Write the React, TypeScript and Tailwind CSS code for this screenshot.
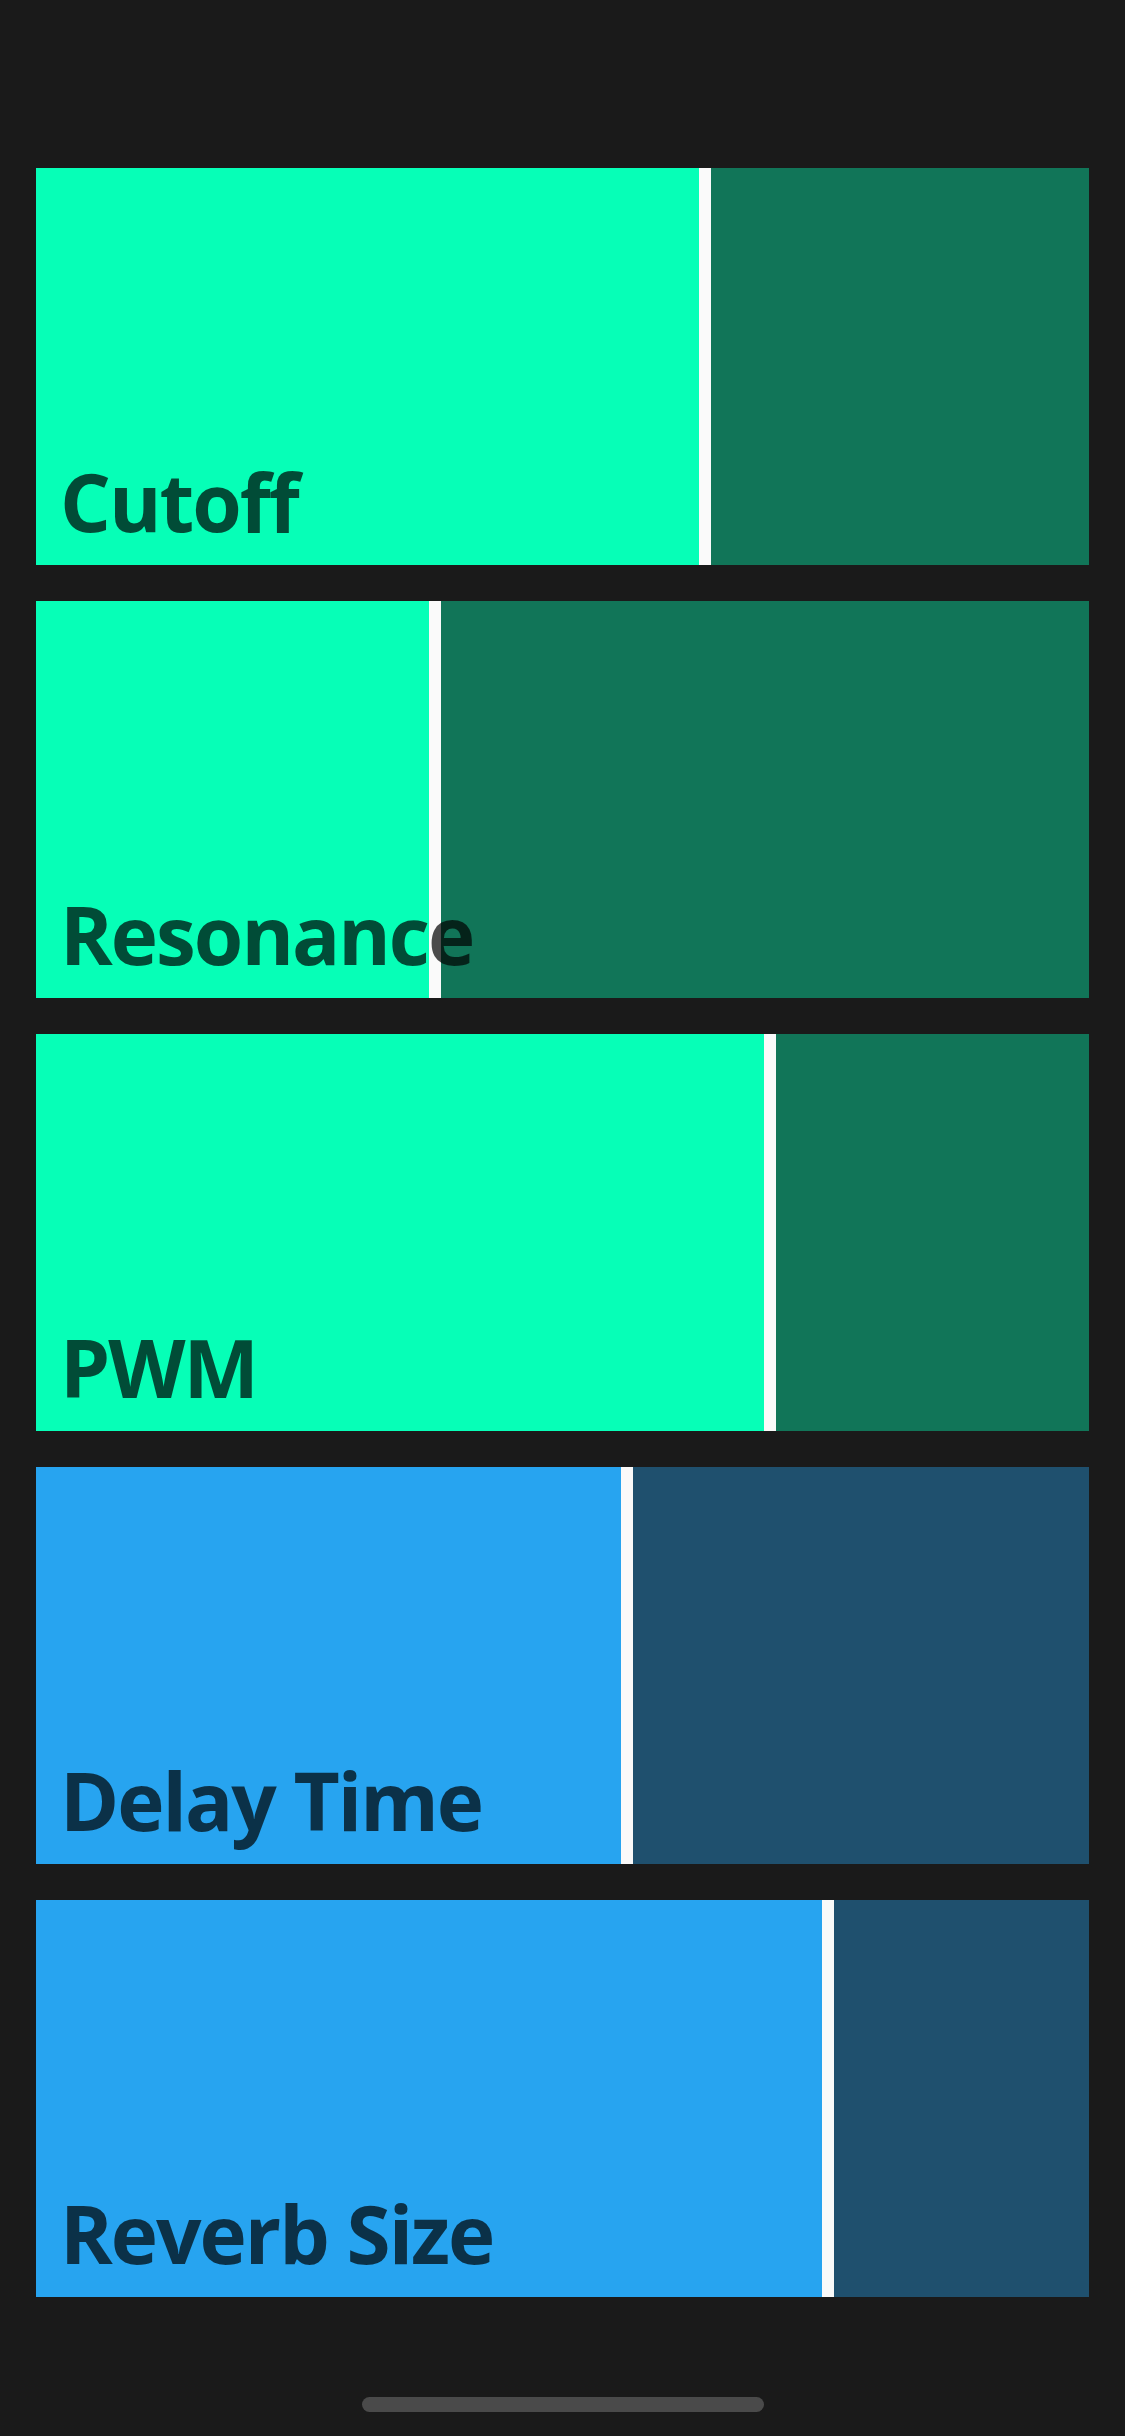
const params = [
  { label: 'Cutoff', value: 663, tone: 'green' },
  { label: 'Resonance', value: 393, tone: 'green' },
  { label: 'PWM', value: 728, tone: 'green' },
  { label: 'Delay Time', value: 585, tone: 'blue' },
  { label: 'Reverb Size', value: 786, tone: 'blue' },
];

function Slider({ label, value, tone }: { label: string; value: number; tone: string }) {
  const green = tone === 'green';
  return (
    <div className={`relative flex h-[397px] w-full ${green ? 'bg-[#117558]' : 'bg-[#1f506e]'}`}>
      <div className={green ? 'bg-[#06ffb7]' : 'bg-[#27a4f0]'} style={{ width: `${value}px` }} />
      <div className="w-[12px] bg-[#fafafa]" />
      <span className="absolute left-[24px] bottom-[24px] text-[80px] leading-none font-bold text-black/70 font-['Open_Sans',sans-serif] tracking-[-2px]">
        {label}
      </span>
    </div>
  );
}

export default function App() {
  return (
    <div className="w-[1125px] h-[2436px] bg-[#1a1a1a] flex flex-col">
      <div className="flex flex-col gap-[36px] px-[36px] pt-[168px]">
        {params.map((p) => (
          <Slider key={p.label} {...p} />
        ))}
      </div>
      <div className="flex-1" />
      <div className="flex justify-center pb-[24px]">
        <div className="w-[402px] h-[15px] rounded-full bg-[#4a4a4a]" />
      </div>
    </div>
  );
}
